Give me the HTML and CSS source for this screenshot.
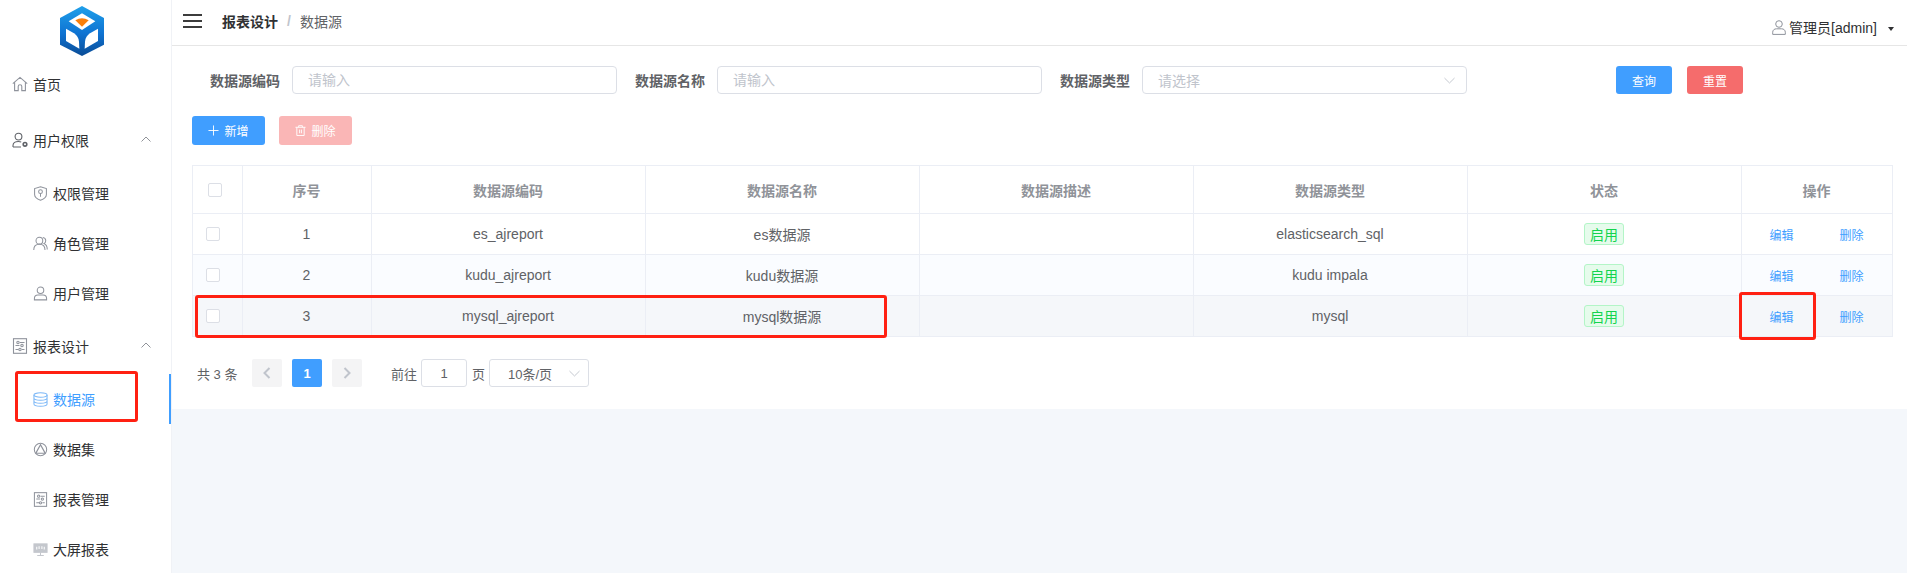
FILE: index.html
```html
<!DOCTYPE html>
<html lang="zh-CN">
<head>
<meta charset="utf-8">
<title>数据源</title>
<link rel="stylesheet" href="styles.css">
</head>
<body>
<div class="app">
  <aside class="sidebar">
    <div class="logo">
      <svg width="44" height="50" viewBox="180 18 132 150">
        <defs>
          <linearGradient id="lg" x1="0" y1="0" x2="0" y2="1">
            <stop offset="0" stop-color="#1fa0ea"/>
            <stop offset="0.55" stop-color="#0f73d2"/>
            <stop offset="1" stop-color="#0a4c96"/>
          </linearGradient>
        </defs>
        <polygon points="246,18 312,54 312,134 246,168 180,134 180,54" fill="url(#lg)"/>
        <polygon points="246,40 286,64 246,90 206,64" fill="#fff"/>
        <path d="M226 61 Q246 48 266 61 L246 80 Z" fill="#f97f0c"/>
        <path d="M198 86 L222 100 Q236 110 237 125 L238 146 L198 123 Z" fill="#fff"/>
        <path d="M294 86 L270 100 Q256 110 255 125 L254 146 L294 123 Z" fill="#fff"/>
      </svg>
    </div>
    <nav class="menu">
      <a class="item top">
        <svg class="ico" viewBox="0 0 16 16"><path d="M.8 7.6 8 1.4l7.2 6.2M2.6 6.4v8.2h3.6v-4a1.8 1.8 0 0 1 3.6 0v4h3.6V6.4"/></svg>
        <span>首页</span>
      </a>
      <div class="group">
        <a class="item top">
          <svg class="ico ico-dark" viewBox="0 0 16 16"><circle cx="6.500" cy="4.600" r="3.400"/><path d="M1 15v-1.600C1 10.700 3.200 9.500 6.500 9.500c1 0 1.900.1 2.700.4M1 15h8"/><circle cx="13" cy="12.300" r="1.800" stroke-width="1.600"/></svg>
          <span>用户权限</span>
          <svg class="arrow" viewBox="0 0 10 6"><path d="M.5 5.500 5 1l4.500 4.500"/></svg>
        </a>
        <a class="item sub">
          <svg class="ico" viewBox="0 0 16 16"><path d="M8 .8 14.300 2.800V9c0 3-3 5-6.300 6.200C4.700 14 1.700 12 1.700 9V2.800Z"/><circle cx="8" cy="6" r="2"/><path d="M8 8v3.500"/></svg>
          <span>权限管理</span>
        </a>
        <a class="item sub">
          <svg class="ico" viewBox="0 0 16 16"><circle cx="6.800" cy="5" r="3.600"/><path d="M.8 15c0-4 2.500-6.200 6-6.200s6 2.200 6 6.200M10.500 1.600c2 .3 3.100 1.700 3.100 3.400 0 1.400-.8 2.500-2 3.100 2 .8 3.600 3 3.600 6.400"/></svg>
          <span>角色管理</span>
        </a>
        <a class="item sub">
          <svg class="ico" viewBox="0 0 16 16"><circle cx="8" cy="4.600" r="3.500"/><path d="M5.300 9.500h5.400c2.400 0 3.800 1.600 3.800 3.700v1.600h-13v-1.600c0-2.100 1.400-3.700 3.800-3.700Z"/></svg>
          <span>用户管理</span>
        </a>
      </div>
      <div class="group">
        <a class="item top">
          <svg class="ico" viewBox="0 0 16 16"><rect x="1.500" y=".7" width="13" height="14.600"/><path d="M8 4.500h4.500M3.500 7.500h4M3.500 11.500h3M10 11.500h2.500"/><circle cx="6" cy="4.500" r="1.200"/><circle cx="10" cy="7.500" r="1.200"/><circle cx="8" cy="11.500" r="1.200"/></svg>
          <span>报表设计</span>
          <svg class="arrow" viewBox="0 0 10 6"><path d="M.5 5.500 5 1l4.500 4.500"/></svg>
        </a>
        <a class="item sub active">
          <svg class="ico" viewBox="0 0 16 16"><ellipse cx="8" cy="3.200" rx="7" ry="2.400"/><path d="M1 3.200v9.600c0 1.300 3.100 2.400 7 2.400s7-1.100 7-2.400V3.200M1 6.400c0 1.300 3.100 2.400 7 2.400s7-1.100 7-2.400M1 9.600c0 1.300 3.100 2.400 7 2.400s7-1.100 7-2.400"/></svg>
          <span>数据源</span>
        </a>
        <a class="item sub">
          <svg class="ico" viewBox="0 0 16 16"><circle cx="8" cy="8" r="6.600"/><path d="M8 3 3 12h10Z" stroke-width="1.300"/></svg>
          <span>数据集</span>
        </a>
        <a class="item sub">
          <svg class="ico" viewBox="0 0 16 16"><rect x="1.500" y=".7" width="13" height="14.600"/><path d="M8 4.500h4.500M3.500 7.500h4M3.500 11.500h3M10 11.500h2.500"/><circle cx="6" cy="4.500" r="1.200"/><circle cx="10" cy="7.500" r="1.200"/><circle cx="8" cy="11.500" r="1.200"/></svg>
          <span>报表管理</span>
        </a>
        <a class="item sub">
          <svg class="ico ico-screen" viewBox="0 0 16 16"><rect x="1" y="2" width="14" height="9" fill="#c4c7cd"/><path d="M4 5v3M6.500 4.500v3M9.500 4.500v3M12 5v3" stroke="#fff"/><path d="M8 11v3M4.500 14.500h7"/></svg>
          <span>大屏报表</span>
        </a>
      </div>
    </nav>
  </aside>

  <main class="main">
    <header class="topbar">
      <div class="top-left">
        <svg class="burger" viewBox="0 0 19 14"><path d="M0 1h19M0 7h19M0 13h19"/></svg>
        <div class="crumbs">
          <b class="crumb-a">报表设计</b>
          <i class="crumb-sep">/</i>
          <span class="crumb-b">数据源</span>
        </div>
      </div>
      <div class="user">
        <svg class="user-ico" viewBox="0 0 14 15"><circle cx="7" cy="4" r="3.300"/><path d="M4.500 8.800h5c2.300 0 3.800 1.400 3.800 3.400v2.200H.7v-2.200c0-2 1.500-3.400 3.800-3.400Z"/></svg>
        <span>管理员[admin]</span>
        <i class="caret"></i>
      </div>
    </header>

    <section class="panel">
      <form class="search">
        <div class="field">
          <label class="field-label">数据源编码</label>
          <input class="input" placeholder="请输入">
        </div>
        <div class="field">
          <label class="field-label">数据源名称</label>
          <input class="input" placeholder="请输入">
        </div>
        <div class="field">
          <label class="field-label">数据源类型</label>
          <div class="select">
            <span>请选择</span>
            <svg class="chev" viewBox="0 0 12 7"><path d="M.5 .8 6 6.200 11.500 .8"/></svg>
          </div>
        </div>
        <div class="search-actions">
          <button type="button" class="btn primary">查询</button>
          <button type="button" class="btn danger">重置</button>
        </div>
      </form>

      <div class="toolbar">
        <button type="button" class="btn wide primary">
          <svg class="btn-ico" viewBox="0 0 12 12"><path d="M6 .5v11M.5 6h11"/></svg>新增
        </button>
        <button type="button" class="btn wide faded">
          <svg class="btn-ico" viewBox="0 0 12 12"><path d="M.5 2.500h11M4 2.500V.8h4v1.700M2 2.500v9h8v-9M5 5v4M7 5v4"/></svg>删除
        </button>
      </div>

      <table class="grid">
        <colgroup>
          <col class="c-check"><col class="c-no"><col class="c-col"><col class="c-col"><col class="c-col"><col class="c-col"><col class="c-col"><col class="c-act">
        </colgroup>
        <thead>
          <tr>
            <th class="cell-check head"><i class="check"></i></th>
            <th>序号</th><th>数据源编码</th><th>数据源名称</th><th>数据源描述</th><th>数据源类型</th><th>状态</th><th>操作</th>
          </tr>
        </thead>
        <tbody>
          <tr>
            <td class="cell-check"><i class="check"></i></td>
            <td>1</td><td>es_ajreport</td><td>es数据源</td><td></td><td>elasticsearch_sql</td>
            <td><span class="tag">启用</span></td>
            <td><div class="ops"><a>编辑</a><a>删除</a></div></td>
          </tr>
          <tr class="striped">
            <td class="cell-check"><i class="check"></i></td>
            <td>2</td><td>kudu_ajreport</td><td>kudu数据源</td><td></td><td>kudu impala</td>
            <td><span class="tag">启用</span></td>
            <td><div class="ops"><a>编辑</a><a>删除</a></div></td>
          </tr>
          <tr class="hovered">
            <td class="cell-check"><i class="check"></i></td>
            <td>3</td><td>mysql_ajreport</td><td>mysql数据源</td><td></td><td>mysql</td>
            <td><span class="tag">启用</span></td>
            <td><div class="ops"><a>编辑</a><a>删除</a></div></td>
          </tr>
        </tbody>
      </table>

      <div class="pager">
        <span class="total">共 3 条</span>
        <button type="button" class="page-btn"><svg viewBox="0 0 8 12"><path d="M6.500 1 1.500 6l5 5"/></svg></button>
        <button type="button" class="page-btn current">1</button>
        <button type="button" class="page-btn"><svg viewBox="0 0 8 12"><path d="M1.500 1l5 5-5 5"/></svg></button>
        <span class="goto">前往</span>
        <input class="page-input" value="1">
        <span class="page-word">页</span>
        <div class="page-size">
          <span>10条/页</span>
          <svg class="chev" viewBox="0 0 12 7"><path d="M.5 .8 6 6.200 11.500 .8"/></svg>
        </div>
      </div>
    </section>
  </main>
</div>
<div class="mark mark-side"></div>
<div class="mark mark-row"></div>
<div class="mark mark-edit"></div>
</body>
</html>
```

FILE: styles.css
```css
* { box-sizing: border-box; }
html, body { margin: 0; height: 100%; overflow: hidden; }
body {
  position: relative;
  font-family: "Liberation Sans", "Noto Sans CJK SC", sans-serif;
  font-size: 14px;
  color: #606266;
  background: #f4f7fb;
}
.app { display: flex; height: 573px; }

/* sidebar */
.sidebar {
  width: 172px;
  flex: none;
  background: #fff;
  border-right: 1px solid #f0f2f6;
  overflow: hidden;
}
.logo { height: 59px; padding-top: 6px; display: flex; justify-content: center; align-items: flex-start; padding-right: 8px; }
.item {
  position: relative;
  display: flex;
  align-items: center;
  height: 50px;
  color: #303133;
}
.top { padding-left: 12px; }
.sub { padding-left: 33px; }
.group { padding-top: 6px; }
.group .top { margin-bottom: 3px; }
.group + .group { padding-top: 3px; }
.ico {
  width: 15px;
  height: 15px;
  flex: none;
  margin-right: 5px;
  fill: none;
  stroke: #8f939c;
  stroke-width: 1.1;
}
.top .ico { width: 16px; height: 16px; margin-right: 5px; }
.ico-dark { stroke: #5f6268; }
.ico-screen { stroke: #c4c7cd; }
.arrow {
  position: absolute;
  left: 141px;
  top: 21px;
  width: 10px;
  height: 6px;
  fill: none;
  stroke: #909399;
  stroke-width: 1;
}
.active { color: #409eff; }
.active .ico { stroke: #7db8f7; }
.active::after {
  content: "";
  position: absolute;
  right: -1px;
  top: 0;
  width: 3px;
  height: 50px;
  background: #409eff;
}

/* main */
.main { flex: 1; min-width: 0; display: flex; flex-direction: column; }
.topbar {
  height: 46px;
  flex: none;
  display: flex;
  justify-content: space-between;
  align-items: flex-start;
  background: #fff;
  border-bottom: 1px solid #e6e6e6;
}
.top-left { display: flex; align-items: center; height: 42px; padding-left: 11px; }
.burger { width: 19px; height: 14px; fill: none; stroke: #3c3c3c; stroke-width: 2; }
.crumbs { margin-left: 20px; display: flex; align-items: center; }
.crumb-a { color: #303133; font-weight: 700; }
.crumb-sep { color: #c0c4cc; font-style: normal; font-weight: 700; margin: 0 9px; }
.crumb-b { color: #606266; }
.user {
  display: flex;
  align-items: center;
  height: 54px;
  padding-right: 13px;
  color: #303133;
}
.user-ico { width: 14px; height: 15px; margin-right: 3px; fill: none; stroke: #8f939c; stroke-width: 1; }
.caret {
  width: 0;
  height: 0;
  margin-left: 11px;
  margin-top: 3px;
  border-left: 3.500px solid transparent;
  border-right: 3.500px solid transparent;
  border-top: 4px solid #303133;
}

.panel { background: #fff; padding: 20px 15px 22px 20px; }
.search { display: flex; align-items: center; padding-left: 18px; height: 28px; }
.field { display: flex; align-items: center; width: 407px; margin-right: 18px; flex: none; }
.field-label { width: 70px; margin-right: 12px; flex: none; font-weight: 700; color: #606266; white-space: nowrap; }
.input, .select {
  flex: 1;
  min-width: 0;
  height: 28px;
  border: 1px solid #dcdfe6;
  border-radius: 4px;
  padding: 0 15px;
  font: inherit;
  color: #606266;
  background: #fff;
  outline: none;
}
.input::placeholder { color: #c0c4cc; }
.select { display: flex; align-items: center; justify-content: space-between; color: #c0c4cc; padding-right: 11px; }
.chev { width: 11px; height: 7px; fill: none; stroke: #c0c4cc; stroke-width: 1; }
.search-actions { display: flex; gap: 15px; margin-left: 131px; }
.btn {
  display: inline-flex;
  align-items: center;
  justify-content: center;
  width: 56px;
  height: 28px;
  border: 0;
  border-radius: 3px;
  font: inherit;
  font-size: 12px;
  color: #fff;
  padding: 0;
}
.primary { background: #409eff; }
.danger { background: #f56c6c; }
.faded { background: #fab6b6; }
.wide { width: 73px; height: 29px; }
.btn-ico { width: 11px; height: 11px; margin-right: 5px; fill: none; stroke: #fff; stroke-width: 1; }
.toolbar { display: flex; gap: 14px; margin-top: 22px; }

/* table */
.grid { width: 1700px; margin-top: 20px; border-collapse: collapse; table-layout: fixed; background: #fff; }
.c-check { width: 50px; }
.c-no { width: 129px; }
.c-col { width: 274px; }
.c-act { width: 151px; }
.grid th, .grid td { border: 1px solid #ebeef5; text-align: center; padding: 0 1px 0 0; color: #606266; font-weight: 400; }
.grid th { height: 48px; color: #909399; font-weight: 700; }
.grid td { height: 41px; }
.grid .cell-check { text-align: left; padding-left: 13px; }
.grid .cell-check.head { padding-left: 15px; }
.check {
  display: block;
  width: 14px;
  height: 14px;
  border: 1px solid #dcdfe6;
  border-radius: 2px;
  background: #fff;
}
.striped td { background: #fafcff; }
.hovered td { background: #f5f7fa; }
.tag {
  display: inline-flex;
  align-items: center;
  justify-content: center;
  width: 40px;
  height: 22px;
  border: 1px solid #b3f5c7;
  border-radius: 3px;
  background: #e6fbec;
  color: #13d44e;
}
.ops { display: flex; justify-content: center; gap: 46px; font-size: 12px; color: #409eff; }

/* pagination */
.pager { display: flex; align-items: center; height: 28px; margin-top: 22px; padding-left: 5px; font-size: 13px; }
.total { width: 55px; flex: none; }
.page-btn {
  display: inline-flex;
  align-items: center;
  justify-content: center;
  width: 30px;
  height: 28px;
  margin-right: 10px;
  border: 0;
  border-radius: 2px;
  padding: 0;
  background: #f4f4f5;
  font: inherit;
  font-weight: 700;
  color: #c0c4cc;
}
.page-btn svg { width: 8px; height: 12px; fill: none; stroke: #c0c4cc; stroke-width: 2; }
.current { background: #409eff; color: #fff; }
.goto { margin-left: 19px; }
.page-input {
  width: 46px;
  height: 28px;
  margin: 0 5px 0 4px;
  border: 1px solid #dcdfe6;
  border-radius: 3px;
  padding: 0;
  font: inherit;
  color: #606266;
  text-align: center;
  outline: none;
}
.page-word { margin-right: -1px; }
.page-size {
  display: flex;
  align-items: center;
  justify-content: space-between;
  width: 100px;
  height: 28px;
  margin-left: 5px;
  padding: 0 8px 0 18px;
  border: 1px solid #dcdfe6;
  border-radius: 3px;
}

/* annotation marks drawn over the screenshot */
.mark { position: absolute; border: 3px solid #ff2012; border-radius: 3px; pointer-events: none; }
.mark-side { left: 15px; top: 371px; width: 123px; height: 51px; }
.mark-row { left: 195px; top: 295px; width: 692px; height: 43px; }
.mark-edit { left: 1739px; top: 292px; width: 77px; height: 48px; }
```
